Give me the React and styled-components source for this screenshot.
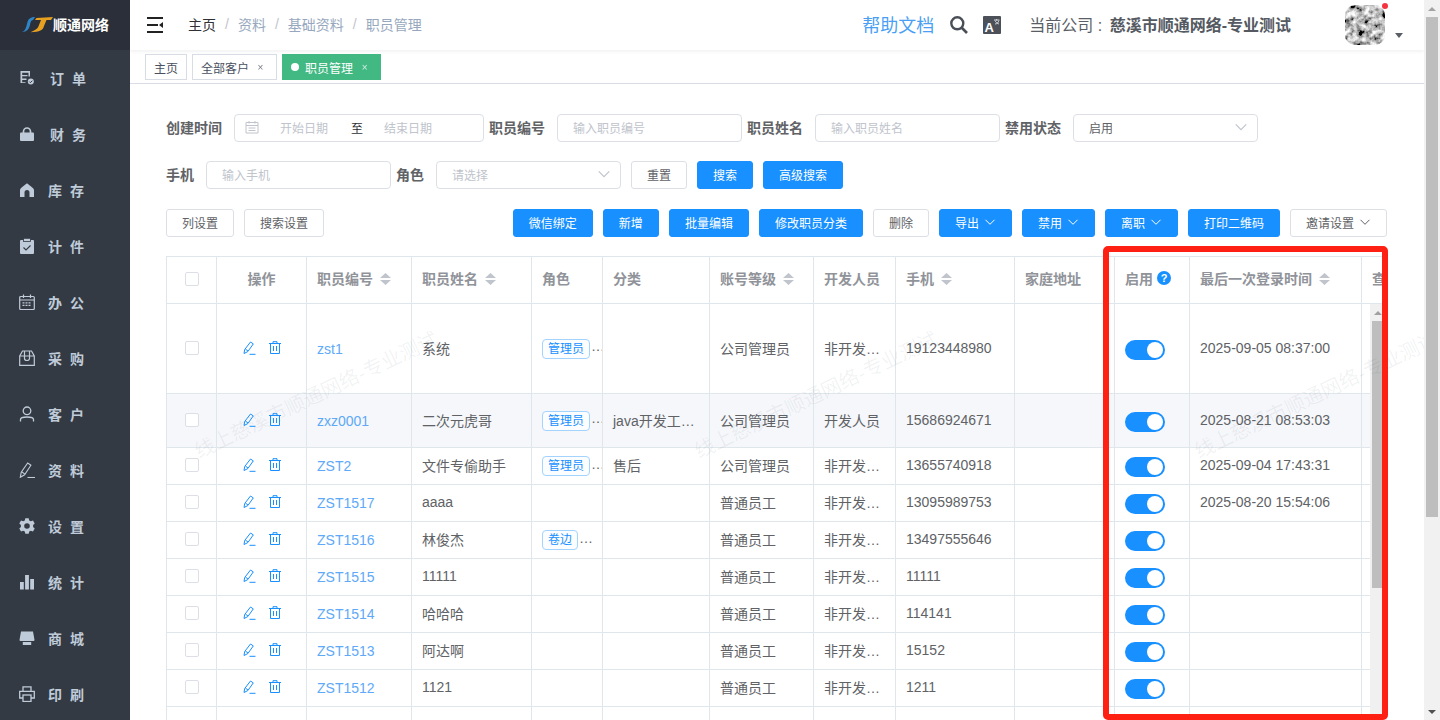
import React from 'react';
import styled, { createGlobalStyle } from 'styled-components';

const Global = createGlobalStyle`
  html, body { margin: 0; padding: 0; height: 100%; overflow: hidden; background: #fff; }
  body { font-family: "Liberation Sans", "Noto Sans CJK SC", sans-serif; font-size: 14px; color: #606266; }
  * { box-sizing: border-box; }
`;

const Shell = styled.div`display: flex; height: 100vh; overflow: hidden;`;
const Sidebar = styled.aside`width: 130px; flex: none; background: #343a43; color: #bfcbd9;`;
const Brand = styled.div`height: 50px; background: #2b2f3a; display: flex; align-items: center; padding-left: 22px;`;
const BrandName = styled.span`color: #fff; font-size: 14px; font-weight: 700; line-height: 50px;`;
const MenuItem = styled.div`height: 56px; display: flex; align-items: center; padding-left: 19px;`;
const MenuLabel = styled.span`margin-left: ${p => p.$gap}px; font-size: 14px; font-weight: 700; letter-spacing: 2px; white-space: nowrap;`;

const Main = styled.main`position: relative; flex: 1; min-width: 0; overflow: hidden;`;
const TopBar = styled.header`height: 50px; display: flex; align-items: center; background: #fff; box-shadow: 0 1px 4px rgba(0,21,41,.08); position: relative; padding-left: 17px;`;
const Crumbs = styled.nav`display: flex; align-items: center; margin-left: 25px; padding-bottom: 2px; font-size: 14px; color: #97a8be;`;
const CrumbHome = styled.span`color: #303133;`;
const CrumbSep = styled.span`margin: 0 9px; color: #c0c4cc;`;
const TopRight = styled.div`margin-left: auto; display: flex; align-items: center; height: 50px;`;
const Help = styled.span`font-size: 18px; color: #4a9ff5; margin-right: 16px; padding-bottom: 2px;`;
const IconSlot = styled.span`display: flex; margin-right: ${p => p.$mr}px;`;
const Company = styled.span`font-size: 16px; color: #5a5e66; margin-right: 54px; padding-bottom: 2px; white-space: nowrap;`;
const CompanyName = styled.b`font-weight: 700; color: #555a62; margin-left: 3px;`;
const AvatarWrap = styled.div`position: relative; width: 40px; height: 40px; margin-right: 39px;`;
const AvatarImg = styled.div`width: 40px; height: 40px; border-radius: 10px; overflow: hidden;`;
const Dot = styled.i`position: absolute; top: -2px; right: -3px; width: 6px; height: 6px; border-radius: 50%; background: #f5333f;`;
const Caret = styled.i`position: absolute; left: 50px; top: 28px; border: 4px solid transparent; border-top: 5px solid #5a5e66; border-bottom: 0;`;

const TagsBar = styled.div`height: 34px; border-bottom: 1px solid #d8dce5; display: flex; gap: 5px; padding: 4px 0 0 15px; background: #fff;`;
const Tag = styled.div`height: 26px; display: flex; align-items: center; padding: 0 8px; font-size: 12px; border: 1px solid ${p => p.$on ? '#42b983' : '#d8dce5'}; background: ${p => p.$on ? '#42b983' : '#fff'}; color: ${p => p.$on ? '#fff' : '#495060'};`;
const TagDot = styled.i`width: 8px; height: 8px; border-radius: 50%; background: #fff; margin-right: 6px;`;
const TagClose = styled.span`font-size: 10px; margin-left: 4px; opacity: .75; width: 15px; text-align: center;`;

const Content = styled.section`padding: 30px 37px 0 36px;`;
const FormRow = styled.div`display: flex; align-items: center; height: 28px; margin-bottom: ${p => p.$mb}px;`;
const Label = styled.label`font-size: 14px; font-weight: 700; color: #606266; margin-right: 12px; padding-bottom: 2px; white-space: nowrap;`;
const Field = styled.div`width: ${p => p.$w}px; height: 28px; border: 1px solid #dcdfe6; border-radius: 4px; margin-right: ${p => p.$mr ?? 5}px; padding: 0 10px 2px 15px; display: flex; align-items: center; font-size: 12px; color: ${p => p.$value ? '#606266' : '#c0c4cc'}; background: #fff;`;
const FieldChevron = styled.span`margin-left: auto; display: flex; color: #c0c4cc; margin-right: -1px;`;
const DateField = styled(Field)`padding-left: 10px;`;
const DateHolder = styled.span`width: 48px; margin-left: ${p => p.$ml}px; white-space: nowrap;`;
const DateTo = styled.span`color: #303133; margin-left: 23px;`;

const Btn = styled.button`height: 28px; padding: 0 15px 2px; border-radius: 3px; font: inherit; font-size: 12px; display: inline-flex; align-items: center; justify-content: center; white-space: nowrap; border: 1px solid ${p => p.$primary ? '#1890ff' : '#dcdfe6'}; background: ${p => p.$primary ? '#1890ff' : '#fff'}; color: ${p => p.$primary ? '#fff' : '#606266'};`;
const BtnChevron = styled.span`display: flex; margin-left: 5px;`;
const BtnGroup = styled.div`display: flex; gap: 10px;`;
const Toolbar = styled.div`display: flex; justify-content: space-between; margin-bottom: 19px;`;

const TableWrap = styled.div`position: relative; height: 480px; overflow: hidden;`;
const Table = styled.table`border-collapse: collapse; table-layout: fixed; width: 1345px;`;
const Th = styled.th`height: 47px; padding: 0 10px 4px; border: 1px solid #dfe6ec; font-size: 14px; font-weight: 700; color: #909399; background: #fff; text-align: ${p => p.$center ? 'center' : 'left'}; white-space: nowrap; overflow: hidden;`;
const Tr = styled.tr`background: ${p => p.$hover ? '#f5f7fa' : '#fff'};`;
const Td = styled.td`height: ${p => p.$h}px; padding: 0 10px 2px; border: 1px solid #dfe6ec; font-size: 14px; color: #606266; white-space: nowrap; overflow: hidden; text-overflow: ellipsis; text-align: ${p => p.$center ? 'center' : 'left'};`;
const CheckTd = styled(Td)`padding-bottom: 4px;`;
const RoleTd = styled(Td)`text-overflow: clip; padding-right: 0;`;
const LinkText = styled.span`color: #5ea9f8; position: relative; top: 1px;`;
const Check = styled.i`display: inline-block; width: 14px; height: 14px; border: 1px solid #dcdfe6; border-radius: 2px; background: #fff; vertical-align: middle;`;
const Ops = styled.div`display: flex; justify-content: center; gap: 13px; color: #1890ff;`;
const RoleTag = styled.span`display: inline-block; height: 20px; line-height: 18px; padding: 0 5px; font-size: 12px; color: #1890ff; background: #fbfdff; border: 1px solid #a3d3ff; border-radius: 4px; vertical-align: middle; position: relative; top: 1px;`;
const Dots = styled.span`margin-left: 1px; color: #606266;`;
const Switch = styled.span`display: block; width: 40px; height: 20px; border-radius: 10px; background: #1890ff; position: relative; margin-top: 4px;`;
const Knob = styled.i`position: absolute; right: 2px; top: 2px; width: 16px; height: 16px; border-radius: 50%; background: #fff;`;
const HeadInner = styled.span`display: inline-flex; align-items: center; gap: 7px;`;
const Hint = styled.span`width: 14px; height: 14px; border-radius: 50%; background: #1890ff; color: #fff; font-size: 11px; font-weight: 700; line-height: 14px; text-align: center; margin-left: -3px;`;

const InnerBar = styled.div`position: absolute; right: 0; top: 48px; bottom: 0; width: 17px; background: #f0f0f0; padding: 0 2px;`;
const BarThumb = styled.div`margin-top: 17px; height: 267px; width: 13px; background: #bebebe;`;
const ArrowUp = styled.i`position: absolute; left: 4px; top: 7px; border: 4px solid transparent; border-bottom: 4px solid #a0a0a0; border-top: 0;`;

const PageBar = styled.div`position: relative; width: 16px; flex: none; background: #f1f1f1; padding-left: 2px;`;
const PageThumb = styled.div`margin-top: 17px; width: 12px; height: 500px; background: #bebebe;`;
const PageUp = styled.i`position: absolute; left: 4px; top: 7px; border: 4px solid transparent; border-bottom: 4px solid #a3a3a3; border-top: 0;`;
const PageDown = styled.i`position: absolute; left: 4px; bottom: 6px; border: 4px solid transparent; border-top: 4px solid #505050; border-bottom: 0;`;

const RedBox = styled.div`position: absolute; left: 973px; top: 246px; width: 285px; height: 474px; border: 6px solid #fe2012; border-radius: 5px; pointer-events: none;`;
const Mark = styled.span`position: absolute; left: ${p => p.$x}px; top: ${p => p.$y}px; font-size: 20px; line-height: 24px; white-space: nowrap; color: rgba(60,70,90,.07); transform: translate(-50%,-50%) rotate(-25.5deg); pointer-events: none;`;

const Ic = ({ children, w = 16, h = 16, vb }) => (
  <svg width={w} height={h} viewBox={vb || `0 0 ${w} ${h}`} fill="none" style={{ flex: 'none', display: 'block' }}>{children}</svg>
);
const C = '#bfcbd9';
const BG = '#343a43';
const menu = [
  ['订 单', 15, <Ic><path d="M1.500 1h9.500v5.500H9.500V2.700H3.200v2.300h5.300v1.300H3.200v2.300h4.300v1.300H3.200v2.300h3.300V13h-5z" fill={C}/><circle cx="11.800" cy="11.500" r="3" fill={C}/><path d="M10.300 11.600l1.100 1.100 1.900-2" stroke={BG}/></Ic>],
  ['财 务', 15, <Ic><path d="M4.500 7.500V5.500a3.500 3.500 0 0 1 7 0v2" stroke={C} strokeWidth="1.700"/><rect x="1" y="6.500" width="14" height="8.500" rx="1" fill={C}/></Ic>],
  ['库 存', 13, <Ic><path d="M8 1.200C6.800 2 3 5 1.500 6.800a2 2 0 0 0-.5 1.400V15h4.500v-4.500a2.500 2.500 0 0 1 5 0V15H15V8.200a2 2 0 0 0-.5-1.400C13 5 9.200 2 8 1.200z" fill={C}/></Ic>],
  ['计 件', 13, <Ic><rect x="1" y="2" width="14" height="14" rx="1" fill={C}/><rect x="4.500" y=".3" width="7" height="3.200" fill={C} stroke={BG} strokeWidth=".8"/><path d="M4.500 9.500l2.500 2.500 4.500-4.500" stroke={BG} strokeWidth="1.100"/></Ic>],
  ['办 公', 13, <Ic><rect x=".7" y="2.500" width="14.600" height="13" rx="1" stroke={C} strokeWidth="1.200"/><path d="M.7 6h14.600M4.500.5v3.500M11.500.5v3.500" stroke={C} strokeWidth="1.200"/><path d="M3.500 8.800h9M3.500 11.300h9" stroke={C} strokeWidth="1.300" strokeDasharray="2 1"/></Ic>],
  ['采 购', 13, <Ic><path d="M.7 6V15.300h14.600V6L12.500 1h-9z M.7 6h14.600M5.500 1v7.500a2.500 2 0 0 0 5 0V1" stroke={C} strokeWidth="1.200"/></Ic>],
  ['客 户', 13, <Ic><circle cx="8" cy="4.800" r="3.800" stroke={C} strokeWidth="1.300"/><path d="M1.500 15.500v-2C1.500 11.500 3.500 11 8 11s6.500.5 6.500 2.500v2" stroke={C} strokeWidth="1.300"/></Ic>],
  ['资 料', 13, <Ic><path d="M1.300 15.300l.9-5L8.700 1l3.200 2.200-6.300 9.600z M2.700 9.800l3.200 2.300" stroke={C} strokeWidth="1.100"/><path d="M8.500 15.500H16" stroke={C} strokeWidth="1.100"/></Ic>],
  ['设 置', 13, <Ic><path d="M6.300.2h3.400l.5 2.200 1.600.9 2.200-.7 1.700 3-1.600 1.500v1.800l1.600 1.500-1.700 3-2.200-.7-1.600.9-.5 2.200H6.300l-.5-2.200-1.600-.9-2.200.7-1.700-3L1.900 8.900V7.100L.3 5.600l1.700-3 2.200.7 1.600-.9zM8 5.200a2.800 2.800 0 1 0 0 5.600 2.800 2.800 0 0 0 0-5.600z" fill={C} fillRule="evenodd"/></Ic>],
  ['统 计', 13, <Ic><path d="M1 8h3.800v7.500H1zM6.100 1h3.800v14.500H6.100zM11.200 5H15v10.500h-3.800z" fill={C}/></Ic>],
  ['商 城', 13, <Ic><path d="M2 1.500h12L15.500 10a1 1 0 0 1-1 1h-13a1 1 0 0 1-1-1z" fill={C}/><path d="M3.800 12h8.400v3H3.800z" fill={C}/></Ic>],
  ['印 刷', 13, <Ic><path d="M4 5V.8h8V5M4 12H.7V5.300h14.600V12H12" stroke={C} strokeWidth="1.300"/><rect x="4" y="9" width="8" height="6.500" stroke={C} strokeWidth="1.300"/></Ic>],
];

const ChevronDown = ({ size = 12 }) => (
  <svg width={size} height={size} viewBox="0 0 12 12" fill="none" style={{ display: 'block' }}>
    <path d="M1.500 3.800L6 8.300l4.500-4.500" stroke="currentColor" strokeWidth="1"/>
  </svg>
);
const Sort = () => (
  <svg width="11" height="12" viewBox="0 0 11 12" style={{ display: 'block', marginTop: 2 }}>
    <path d="M5.500 0L11 5H0zM0 7h11l-5.500 5z" fill="#c0c4cc"/>
  </svg>
);
const Pencil = () => (
  <svg width="13" height="14" viewBox="0 0 13 14" fill="none" style={{ display: 'block' }}>
    <path d="M1 12.500l.7-4L7.500 1l2.800 1.900-5.500 7.700z M2.300 8l2.700 2" stroke="currentColor" strokeWidth="1"/>
    <path d="M6.500 13.300h6" stroke="currentColor" strokeWidth="1"/>
  </svg>
);
const Trash = () => (
  <svg width="12" height="13" viewBox="0 0 12 13" fill="none" style={{ display: 'block' }}>
    <path d="M0 2.500h12M4 2.500V.7h4v1.800M1.500 2.500v10h9v-10M4.500 5v5M7.500 5v5" stroke="currentColor" strokeWidth="1"/>
  </svg>
);

const rows = [
  { h: 90, id: 'zst1', name: '系统', role: '管理员', lvl: '公司管理员', dev: '非开发人员', tel: '19123448980', t: '2025-09-05 08:37:00' },
  { h: 54, hover: true, id: 'zxz0001', name: '二次元虎哥', role: '管理员', cat: 'java开发工程师', lvl: '公司管理员', dev: '开发人员', tel: '15686924671', t: '2025-08-21 08:53:03' },
  { h: 37, id: 'ZST2', name: '文件专偷助手', role: '管理员', cat: '售后', lvl: '公司管理员', dev: '非开发人员', tel: '13655740918', t: '2025-09-04 17:43:31' },
  { h: 37, id: 'ZST1517', name: 'aaaa', lvl: '普通员工', dev: '非开发人员', tel: '13095989753', t: '2025-08-20 15:54:06' },
  { h: 37, id: 'ZST1516', name: '林俊杰', role: '卷边', lvl: '普通员工', dev: '非开发人员', tel: '13497555646' },
  { h: 37, id: 'ZST1515', name: '11111', lvl: '普通员工', dev: '非开发人员', tel: '11111' },
  { h: 37, id: 'ZST1514', name: '哈哈哈', lvl: '普通员工', dev: '非开发人员', tel: '114141' },
  { h: 37, id: 'ZST1513', name: '阿达啊', lvl: '普通员工', dev: '非开发人员', tel: '15152' },
  { h: 37, id: 'ZST1512', name: '1121', lvl: '普通员工', dev: '非开发人员', tel: '1211' },
];
const cols = [50, 90, 105, 120, 71, 107, 104, 82, 119, 100, 75, 172, 150];

export default function App() {
  return (
    <Shell>
      <Global />
      <Sidebar>
        <Brand>
          <svg width="31" height="16" viewBox="0 0 31 16" style={{ flex: 'none' }}>
            <path d="M0 15C3 14 4 11 5 7 6 2 8 0 13 0L11 3C9 3.500 8.500 5 8 8 7 12 5 15 0 15Z" fill="#2e86c8"/>
            <path d="M14.500 1L31 0 29 3H24.500L22 9C21 13 18 15 8.500 15.300 13 13 16 12 17 8L19 3H13z" fill="#e8a020"/>
          </svg>
          <BrandName>顺通网络</BrandName>
        </Brand>
        {menu.map(([t, g, icon]) => (
          <MenuItem key={t}>{icon}<MenuLabel $gap={g}>{t}</MenuLabel></MenuItem>
        ))}
      </Sidebar>
      <Main>
        <TopBar>
          <svg width="16" height="16" viewBox="0 0 16 16" style={{ display: 'block' }}>
            <path d="M0 0h16v2H0zM0 14h16v2H0zM0 7h11v2H0zM16 5v6l-4-3z" fill="#222"/>
          </svg>
          <Crumbs>
            <CrumbHome>主页</CrumbHome><CrumbSep>/</CrumbSep>
            <span>资料</span><CrumbSep>/</CrumbSep>
            <span>基础资料</span><CrumbSep>/</CrumbSep>
            <span>职员管理</span>
          </Crumbs>
          <TopRight>
            <Help>帮助文档</Help>
            <IconSlot $mr={15}>
              <svg width="18" height="18" viewBox="0 0 18 18" fill="none">
                <circle cx="7.300" cy="7.300" r="6" stroke="#4a4f57" strokeWidth="2.400"/>
                <path d="M11.500 11.500L17 17" stroke="#4a4f57" strokeWidth="2.600"/>
              </svg>
            </IconSlot>
            <IconSlot $mr={28}>
              <svg width="18" height="18" viewBox="0 0 18 18">
                <rect width="18" height="18" rx="1" fill="#4c5059"/>
                <text x="1.500" y="15.500" fontSize="13" fontWeight="700" fill="#fff" fontFamily="Liberation Sans">A</text>
                <path d="M11 4h5.500M13.700 3v1.500M12 8c2 0 3.500-1.500 3.800-3.500M12 4.500c.6 1.500 2 3 4 3.500" stroke="#fff" strokeWidth=".7" fill="none"/>
              </svg>
            </IconSlot>
            <Company>当前公司 : <CompanyName>慈溪市顺通网络-专业测试</CompanyName></Company>
            <AvatarWrap>
              <AvatarImg>
                <svg width="40" height="40" viewBox="0 0 40 40" style={{ display: 'block' }}>
                  <filter id="mottle">
                    <feTurbulence type="fractalNoise" baseFrequency="0.16" numOctaves="3" seed="11"/>
                    <feColorMatrix values="1 0 0 0 0 1 0 0 0 0 1 0 0 0 0 0 0 0 0 1"/>
                    <feComponentTransfer><feFuncR type="linear" slope="2" intercept="-.5"/><feFuncG type="linear" slope="2" intercept="-.5"/><feFuncB type="linear" slope="2" intercept="-.5"/></feComponentTransfer>
                  </filter>
                  <rect width="40" height="40" filter="url(#mottle)"/>
                </svg>
              </AvatarImg>
              <Dot />
              <Caret />
            </AvatarWrap>
          </TopRight>
        </TopBar>
        <TagsBar>
          <Tag>主页</Tag>
          <Tag>全部客户<TagClose>×</TagClose></Tag>
          <Tag $on><TagDot />职员管理<TagClose>×</TagClose></Tag>
        </TagsBar>
        <Content>
          <FormRow $mb={19}>
            <Label>创建时间</Label>
            <DateField $w={250}>
              <svg width="14" height="14" viewBox="0 0 14 14" fill="none" style={{ flex: 'none' }}>
                <path d="M1 2.500h12v10.500H1zM1 5.500h12M4 1v2.500M10 1v2.500M3.500 8h7M3.500 10.500h7" stroke="#c0c4cc"/>
              </svg>
              <DateHolder $ml={21}>开始日期</DateHolder>
              <DateTo>至</DateTo>
              <DateHolder $ml={21}>结束日期</DateHolder>
            </DateField>
            <Label>职员编号</Label>
            <Field $w={185}>输入职员编号</Field>
            <Label>职员姓名</Label>
            <Field $w={185}>输入职员姓名</Field>
            <Label>禁用状态</Label>
            <Field $w={185} $value>启用<FieldChevron><ChevronDown size={14} /></FieldChevron></Field>
          </FormRow>
          <FormRow $mb={20}>
            <Label>手机</Label>
            <Field $w={185}>输入手机</Field>
            <Label>角色</Label>
            <Field $w={185} $mr={10}>请选择<FieldChevron><ChevronDown size={14} /></FieldChevron></Field>
            <BtnGroup>
              <Btn>重置</Btn>
              <Btn $primary>搜索</Btn>
              <Btn $primary>高级搜索</Btn>
            </BtnGroup>
          </FormRow>
          <Toolbar>
            <BtnGroup>
              <Btn>列设置</Btn>
              <Btn>搜索设置</Btn>
            </BtnGroup>
            <BtnGroup>
              <Btn $primary>微信绑定</Btn>
              <Btn $primary>新增</Btn>
              <Btn $primary>批量编辑</Btn>
              <Btn $primary>修改职员分类</Btn>
              <Btn>删除</Btn>
              <Btn $primary>导出<BtnChevron><ChevronDown /></BtnChevron></Btn>
              <Btn $primary>禁用<BtnChevron><ChevronDown /></BtnChevron></Btn>
              <Btn $primary>离职<BtnChevron><ChevronDown /></BtnChevron></Btn>
              <Btn $primary>打印二维码</Btn>
              <Btn>邀请设置<BtnChevron><ChevronDown /></BtnChevron></Btn>
            </BtnGroup>
          </Toolbar>
          <TableWrap>
            <Table>
              <colgroup>{cols.map((w, i) => <col key={i} style={{ width: w }} />)}</colgroup>
              <thead>
                <tr>
                  <Th $center><Check /></Th>
                  <Th $center>操作</Th>
                  <Th><HeadInner>职员编号<Sort /></HeadInner></Th>
                  <Th><HeadInner>职员姓名<Sort /></HeadInner></Th>
                  <Th>角色</Th>
                  <Th>分类</Th>
                  <Th><HeadInner>账号等级<Sort /></HeadInner></Th>
                  <Th>开发人员</Th>
                  <Th><HeadInner>手机<Sort /></HeadInner></Th>
                  <Th>家庭地址</Th>
                  <Th><HeadInner>启用<Hint>?</Hint></HeadInner></Th>
                  <Th><HeadInner>最后一次登录时间<Sort /></HeadInner></Th>
                  <Th>查看</Th>
                </tr>
              </thead>
              <tbody>
                {rows.map(r => (
                  <Tr key={r.id} $hover={r.hover}>
                    <CheckTd $h={r.h} $center><Check /></CheckTd>
                    <Td $h={r.h}><Ops><Pencil /><Trash /></Ops></Td>
                    <Td $h={r.h}><LinkText>{r.id}</LinkText></Td>
                    <Td $h={r.h}>{r.name}</Td>
                    <RoleTd $h={r.h}>{r.role && <><RoleTag>{r.role}</RoleTag><Dots>…</Dots></>}</RoleTd>
                    <Td $h={r.h}>{r.cat}</Td>
                    <Td $h={r.h}>{r.lvl}</Td>
                    <Td $h={r.h}>{r.dev}</Td>
                    <Td $h={r.h}>{r.tel}</Td>
                    <Td $h={r.h} />
                    <Td $h={r.h}><Switch><Knob /></Switch></Td>
                    <Td $h={r.h}>{r.t}</Td>
                    <Td $h={r.h} />
                  </Tr>
                ))}
                <Tr>
                  {cols.map((_, i) => <Td key={i} $h={37} />)}
                </Tr>
              </tbody>
            </Table>
            <InnerBar><ArrowUp /><BarThumb /></InnerBar>
          </TableWrap>
        </Content>
        <Mark $x={186} $y={395}>线上慈溪市顺通网络-专业测试</Mark>
        <Mark $x={686} $y={395}>线上慈溪市顺通网络-专业测试</Mark>
        <Mark $x={1186} $y={395}>线上慈溪市顺通网络-专业测试</Mark>
        <RedBox />
      </Main>
      <PageBar><PageUp /><PageThumb /><PageDown /></PageBar>
    </Shell>
  );
}
